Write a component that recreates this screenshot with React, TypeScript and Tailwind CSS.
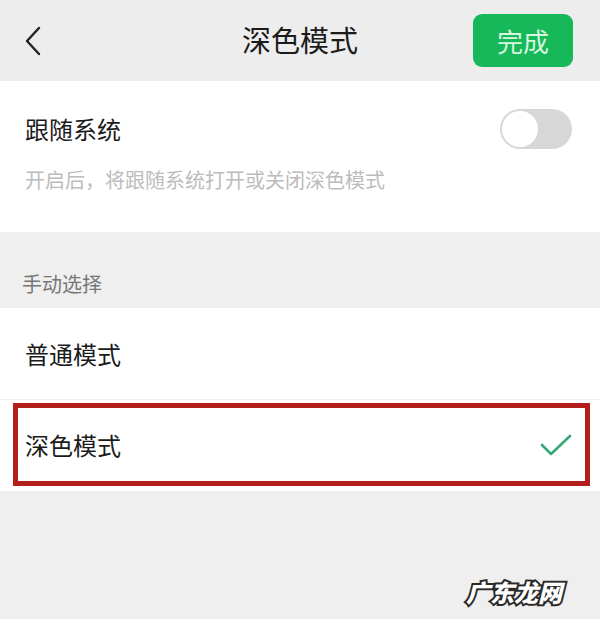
import React, { useState } from 'react';

const font = "font-['Noto_Sans_CJK_SC','Noto_Sans',sans-serif]";

const Toggle = ({ on }: { on: boolean }) => (
  <div className={`w-[72px] h-[40px] rounded-full p-[2px] flex items-center ${on ? 'bg-[#07c160] justify-end' : 'bg-[#d7d7d7] justify-start'}`}>
    <div className="w-[36px] h-[36px] rounded-full bg-white" />
  </div>
);

export default function App() {
  const [followSystem] = useState(false);
  const [mode, setMode] = useState<'light' | 'dark'>('dark');

  return (
    <div className={`relative w-[600px] h-[619px] bg-[#efefef] flex flex-col text-[#1b1b1b] ${font}`}>
      {/* Nav bar */}
      <div className="h-[81px] grid grid-cols-[1fr_auto_1fr] items-center px-[24px] bg-[#ededed]">
        <div className="flex items-center">
          <svg width="18" height="30" viewBox="0 0 18 30" fill="none">
            <path d="M15 2 L3 15 L15 28" stroke="#222" strokeWidth="2.4" strokeLinecap="round" strokeLinejoin="round" />
          </svg>
        </div>
        <div className="text-[29px] leading-none pb-[2px]">深色模式</div>
        <div className="flex justify-end">
          <button className="w-[100px] h-[53px] mr-[3px] rounded-[9px] bg-[#16b85a] text-[#d6f7de] text-[26px] leading-none">
            完成
          </button>
        </div>
      </div>

      {/* Follow system */}
      <div className="bg-white px-[25px] pt-[28px] pb-[42px] flex flex-col">
        <div className="h-[40px] flex items-center justify-between">
          <span className="text-[24px] leading-none">跟随系统</span>
          <div className="mr-[3px]">
            <Toggle on={followSystem} />
          </div>
        </div>
        <div className="mt-[21px] text-[20px] leading-none text-[#bcbcbc]">开启后，将跟随系统打开或关闭深色模式</div>
      </div>

      {/* Section label */}
      <div className="px-[22px] pt-[42px] pb-[14px] text-[20px] leading-none text-[#777]">手动选择</div>

      {/* Mode options */}
      <div className="bg-white flex flex-col pb-[5px]">
        <div
          className="h-[92px] flex items-center px-[25px] border-b border-[#f0f0f0]"
          onClick={() => setMode('light')}
        >
          <span className="text-[24px] leading-none">普通模式</span>
        </div>
        <div
          className="mt-[3px] ml-[13px] mr-[10px] h-[83px] border-[5px] border-[#b3201c] flex items-center justify-between pl-[7px] pr-[12px]"
          onClick={() => setMode('dark')}
        >
          <span className="text-[24px] leading-none">深色模式</span>
          {mode === 'dark' && (
            <svg width="34" height="26" viewBox="0 0 34 26" fill="none">
              <path d="M3 13 L12 22 L31 4" stroke="#3aa876" strokeWidth="2.6" strokeLinecap="round" strokeLinejoin="round" />
            </svg>
          )}
        </div>
      </div>

      {/* Watermark */}
      <div className="absolute right-[38px] bottom-[15px] text-[24px] font-black italic leading-none text-white [-webkit-text-stroke:4px_#2a2a2a] [paint-order:stroke_fill]">
        广东龙网
      </div>
    </div>
  );
}
